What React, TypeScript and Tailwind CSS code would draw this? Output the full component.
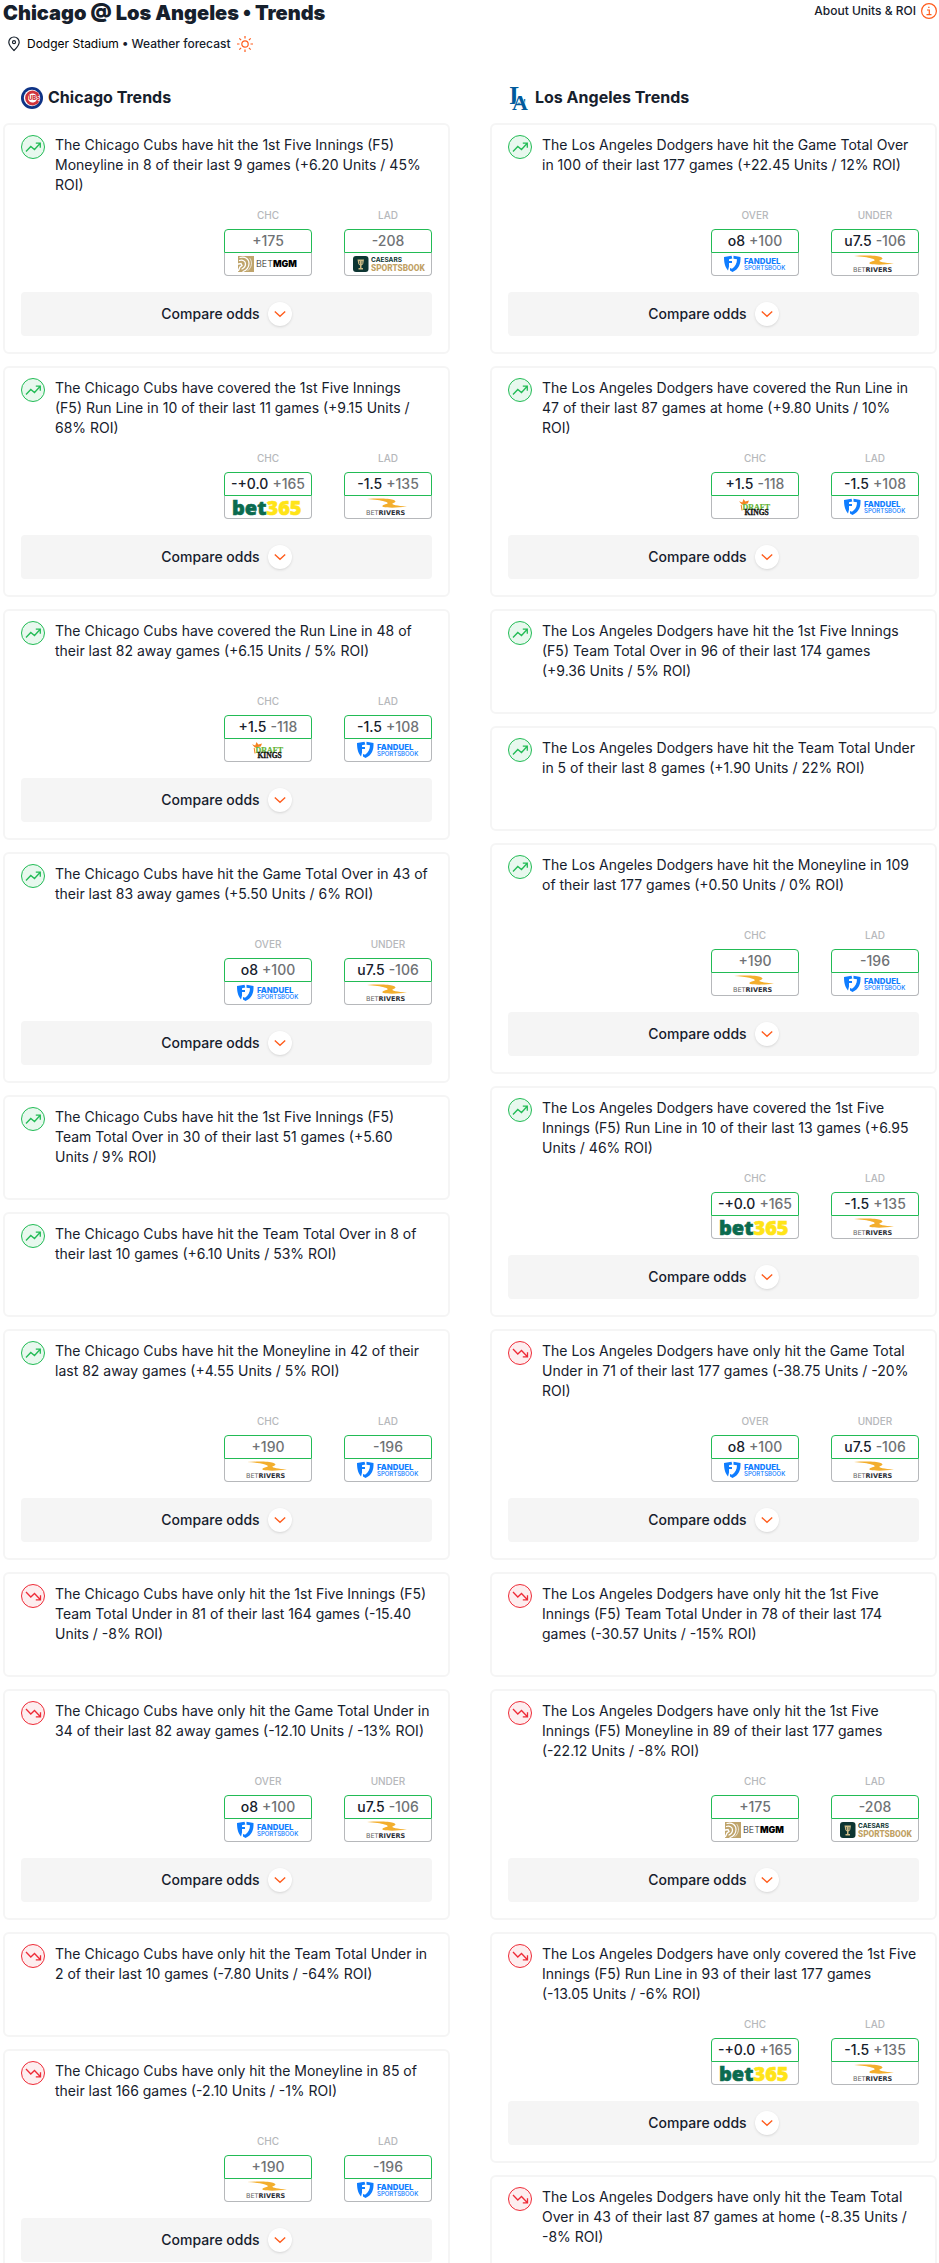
import { useState } from 'react';

type Book = 'betmgm' | 'caesars' | 'fanduel' | 'betrivers' | 'bet365' | 'draftkings';

interface Odd {
  label: string;
  line?: string;
  price: string;
  book: Book;
}

interface Trend {
  text: string;
  up: boolean;
  odds?: Odd[];
}

const f5Moneyline: Odd[] = [
  { label: 'CHC', price: '+175', book: 'betmgm' },
  { label: 'LAD', price: '-208', book: 'caesars' },
];
const f5RunLine: Odd[] = [
  { label: 'CHC', line: '-+0.0', price: '+165', book: 'bet365' },
  { label: 'LAD', line: '-1.5', price: '+135', book: 'betrivers' },
];
const runLine: Odd[] = [
  { label: 'CHC', line: '+1.5', price: '-118', book: 'draftkings' },
  { label: 'LAD', line: '-1.5', price: '+108', book: 'fanduel' },
];
const gameTotal: Odd[] = [
  { label: 'OVER', line: 'o8', price: '+100', book: 'fanduel' },
  { label: 'UNDER', line: 'u7.5', price: '-106', book: 'betrivers' },
];
const moneyline: Odd[] = [
  { label: 'CHC', price: '+190', book: 'betrivers' },
  { label: 'LAD', price: '-196', book: 'fanduel' },
];

const chicagoTrends: Trend[] = [
  { up: true, text: 'The Chicago Cubs have hit the 1st Five Innings (F5) Moneyline in 8 of their last 9 games (+6.20 Units / 45% ROI)', odds: f5Moneyline },
  { up: true, text: 'The Chicago Cubs have covered the 1st Five Innings (F5) Run Line in 10 of their last 11 games (+9.15 Units / 68% ROI)', odds: f5RunLine },
  { up: true, text: 'The Chicago Cubs have covered the Run Line in 48 of their last 82 away games (+6.15 Units / 5% ROI)', odds: runLine },
  { up: true, text: 'The Chicago Cubs have hit the Game Total Over in 43 of their last 83 away games (+5.50 Units / 6% ROI)', odds: gameTotal },
  { up: true, text: 'The Chicago Cubs have hit the 1st Five Innings (F5) Team Total Over in 30 of their last 51 games (+5.60 Units / 9% ROI)' },
  { up: true, text: 'The Chicago Cubs have hit the Team Total Over in 8 of their last 10 games (+6.10 Units / 53% ROI)' },
  { up: true, text: 'The Chicago Cubs have hit the Moneyline in 42 of their last 82 away games (+4.55 Units / 5% ROI)', odds: moneyline },
  { up: false, text: 'The Chicago Cubs have only hit the 1st Five Innings (F5) Team Total Under in 81 of their last 164 games (-15.40 Units / -8% ROI)' },
  { up: false, text: 'The Chicago Cubs have only hit the Game Total Under in 34 of their last 82 away games (-12.10 Units / -13% ROI)', odds: gameTotal },
  { up: false, text: 'The Chicago Cubs have only hit the Team Total Under in 2 of their last 10 games (-7.80 Units / -64% ROI)' },
  { up: false, text: 'The Chicago Cubs have only hit the Moneyline in 85 of their last 166 games (-2.10 Units / -1% ROI)', odds: moneyline },
];

const losAngelesTrends: Trend[] = [
  { up: true, text: 'The Los Angeles Dodgers have hit the Game Total Over in 100 of their last 177 games (+22.45 Units / 12% ROI)', odds: gameTotal },
  { up: true, text: 'The Los Angeles Dodgers have covered the Run Line in 47 of their last 87 games at home (+9.80 Units / 10% ROI)', odds: runLine },
  { up: true, text: 'The Los Angeles Dodgers have hit the 1st Five Innings (F5) Team Total Over in 96 of their last 174 games (+9.36 Units / 5% ROI)' },
  { up: true, text: 'The Los Angeles Dodgers have hit the Team Total Under in 5 of their last 8 games (+1.90 Units / 22% ROI)' },
  { up: true, text: 'The Los Angeles Dodgers have hit the Moneyline in 109 of their last 177 games (+0.50 Units / 0% ROI)', odds: moneyline },
  { up: true, text: 'The Los Angeles Dodgers have covered the 1st Five Innings (F5) Run Line in 10 of their last 13 games (+6.95 Units / 46% ROI)', odds: f5RunLine },
  { up: false, text: 'The Los Angeles Dodgers have only hit the Game Total Under in 71 of their last 177 games (-38.75 Units / -20% ROI)', odds: gameTotal },
  { up: false, text: 'The Los Angeles Dodgers have only hit the 1st Five Innings (F5) Team Total Under in 78 of their last 174 games (-30.57 Units / -15% ROI)' },
  { up: false, text: 'The Los Angeles Dodgers have only hit the 1st Five Innings (F5) Moneyline in 89 of their last 177 games (-22.12 Units / -8% ROI)', odds: f5Moneyline },
  { up: false, text: 'The Los Angeles Dodgers have only covered the 1st Five Innings (F5) Run Line in 93 of their last 177 games (-13.05 Units / -6% ROI)', odds: f5RunLine },
  { up: false, text: 'The Los Angeles Dodgers have only hit the Team Total Over in 43 of their last 87 games at home (-8.35 Units / -8% ROI)' },
];

function BookLogo({ book }: { book: Book }) {
  return (
    <svg width="86" height="22" viewBox="0 0 86 22" className="overflow-visible" aria-hidden="true">
      {book === 'betmgm' && (
        <>
          <rect x="13" y="3" width="16" height="16" fill="#bfa46b" />
          <g fill="none" stroke="#fff" strokeLinecap="round">
            <path d="M15 4.5c5-1.500 9 1.500 9 6 0 4-2 6.500-6 8" strokeWidth="1.200" />
            <path d="M14.500 7.500c3-1 6 .5 6 3.500s-1.500 4-3.500 5" strokeWidth="1.300" />
            <path d="M13.500 11l2.500-.5 1 2-2 1.500-1.500 3.500" strokeWidth="1.400" />
            <path d="M25 5.500c2.500 3.500 2 8.500-2 12" strokeWidth=".7" />
          </g>
          <text x="31" y="14" fontSize="9" fontWeight="300" fill="#222">
            BET<tspan fontWeight="900" fill="#000">MGM</tspan>
          </text>
        </>
      )}
      {book === 'caesars' && (
        <>
          <rect x="8" y="3" width="15.500" height="16" rx="3" fill="#0d3532" />
          <path d="M12.500 6.500h6.500l-.8 4.500-1.700 1.500v2.500h1.500v1.500h-4.500V15H15v-2.500L13.300 11z" fill="#cdbb85" />
          <path d="M14.500 8v3M17 8v3" stroke="#0d3532" strokeWidth=".6" />
          <text x="26" y="8.500" fontSize="6.500" fontWeight="700" fill="#0d3532">CAESARS</text>
          <text x="26" y="17.500" fontSize="8.300" fontWeight="800" fill="#c0a062" style={{ fontFamily: 'Roboto, sans-serif' }}>SPORTSBOOK</text>
        </>
      )}
      {book === 'fanduel' && (
        <>
          <path d="M12 4l7.500-1.200.8 2.700-3.300.7V8h3v2h-3v3.500l-1 4C13.500 14.500 12 11 12 4z" fill="#0f7dff" />
          <path d="M21.500 2.800L28.500 4c.3 7-1.500 12-8 15l-2.500-1.500V15l2 .8c3.200-2.300 5-5 5-9.500l-3.500-.6z" fill="#0f7dff" />
          <text x="32" y="10.500" fontSize="7.800" fontWeight="800" fill="#0f7dff">FANDUEL</text>
          <text x="32" y="16.500" fontSize="6" fontWeight="500" fill="#0f7dff">SPORTSBOOK</text>
        </>
      )}
      {book === 'betrivers' && (
        <>
          <path d="M22 3C32 2.300 44 2.300 48 3.800c4 1.500 2.500 2.700-.5 3.600-1.500 1 4.500 2.300 14.500 3.100-10 1.500-19 1.300-23.500.6-2.500-.9-.5-2.300 3-3.100C46 6.700 38 4 22 3z" fill="#f3ae2d" />
          <text x="21" y="19" fontSize="6.500" fill="#666" style={{ fontFamily: '"DejaVu Sans", sans-serif' }}>
            BET<tspan fontWeight="700" fill="#2b2f38">RIVERS</tspan>
          </text>
        </>
      )}
      {book === 'bet365' && (
        <text x="7" y="18.500" fontSize="20" fontWeight="900" fill="#0b6b4f" stroke="#0b6b4f" strokeWidth=".6" style={{ fontFamily: '"Noto Sans", "Open Sans", sans-serif' }}>
          bet<tspan fill="#ffe418" stroke="#ffe418">365</tspan>
        </text>
      )}
      {book === 'draftkings' && (
        <>
          <path d="M27 5.200l3.300 1.300L31.500 3l1.800 2.500L37 4.500l-1.200 3-6 1z" fill="#f58220" />
          <path d="M29.200 9l.8 5.500" stroke="#f58220" strokeWidth="1" />
          <text x="30.500" y="13.600" fontSize="8" fontWeight="700" fill="#61b22f" stroke="#61b22f" strokeWidth=".2" style={{ fontFamily: '"Liberation Serif", serif' }}>DRAFT</text>
          <text x="32.500" y="19.300" fontSize="7.500" fontWeight="700" fill="#111" stroke="#111" strokeWidth=".3" style={{ fontFamily: '"Liberation Serif", serif' }}>KINGS</text>
        </>
      )}
    </svg>
  );
}

function TrendIcon({ up }: { up: boolean }) {
  return up ? (
    <svg width="24" height="24" viewBox="0 0 24 24" fill="none" stroke="#22bb55" className="shrink-0" aria-hidden="true">
      <circle cx="12" cy="12" r="11.500" fill="#e8f8ee" />
      <path d="M5 16.500l4.800-5 3.700 3L19 8.500M14.800 8.200h4.500v4.500" strokeWidth="1.300" />
    </svg>
  ) : (
    <svg width="24" height="24" viewBox="0 0 24 24" fill="none" stroke="#ee2b37" className="shrink-0" aria-hidden="true">
      <circle cx="12" cy="12" r="11.500" fill="#fdeeef" />
      <path d="M5 8l4.800 5 3.700-3.500 5.700 6M14.800 15.800h4.700v-4.500" strokeWidth="1.300" />
    </svg>
  );
}

function CubsLogo() {
  return (
    <svg width="24" height="24" viewBox="-1 -1 24 24" aria-hidden="true">
      <circle cx="11" cy="11" r="11" fill="#0e3386" />
      <circle cx="11" cy="11" r="8.200" fill="#fff" />
      <path d="M16.800 8.200A6 6 0 1 0 16.800 13.800" fill="none" stroke="#d0343b" strokeWidth="2.800" />
      <path d="M15.500 5.500h1.800v3.300h-1.800zM15.500 13.200h1.800v3.300h-1.800z" fill="#d0343b" />
      <text x="7.500" y="13.200" fontSize="5.500" fontWeight="900" fill="#d0343b">UBS</text>
    </svg>
  );
}

function DodgersLogo() {
  return (
    <svg width="24" height="24" viewBox="0 0 24 24" fill="#005a9c" className="overflow-visible" aria-hidden="true" style={{ fontFamily: '"Liberation Serif", serif' }}>
      <text x="2.500" y="18" fontSize="25" fontWeight="700">L</text>
      <text x="5" y="23.500" fontSize="22" fontWeight="700" stroke="#fff" strokeWidth=".8" paintOrder="stroke">A</text>
    </svg>
  );
}

function OddBox({ odd }: { odd: Odd }) {
  return (
    <div className="w-[88px]">
      <p className="mb-1.5 text-center text-[10px] leading-4 font-medium text-[#b6b8bb]">{odd.label}</p>
      <a href="#odds" className="block">
        <span className="flex h-6 items-center justify-center gap-1 rounded-t border border-[#22bb55] text-sm font-medium text-[#6f7275]">
          {odd.line && <span className="text-[#16202c]">{odd.line}</span>}
          <span>{odd.price}</span>
        </span>
        <span className="flex h-[23px] items-center justify-center rounded-b border border-t-0 border-[#b6b8bb]">
          <BookLogo book={odd.book} />
        </span>
      </a>
    </div>
  );
}

function TrendCard({ trend }: { trend: Trend }) {
  const [open, setOpen] = useState(false);

  return (
    <article className="rounded-md border-2 border-[#f5f5f5] px-4 pt-2.5 pb-4">
      <div className="flex min-h-[60px] gap-2.5 pr-0.5">
        <TrendIcon up={trend.up} />
        <p className="text-sm leading-5">{trend.text}</p>
      </div>
      {trend.odds ? (
        <>
          <div className="mt-3 flex justify-end gap-8">
            {trend.odds.map((odd) => (
              <OddBox key={odd.label} odd={odd} />
            ))}
          </div>
          <button
            type="button"
            aria-expanded={open}
            onClick={() => setOpen(!open)}
            className="mt-4 flex h-11 w-full items-center justify-center gap-2 rounded bg-[#f5f5f5] text-sm font-medium"
          >
            Compare odds
            <span className="flex size-6 items-center justify-center rounded-full bg-white shadow-sm">
              <svg width="12" height="8" viewBox="0 0 12 8" fill="none" stroke="#ff5c1c" strokeWidth="1.400" aria-hidden="true">
                <path d="M.8 1.500L6 6.200l5.200-4.700" />
              </svg>
            </span>
          </button>
        </>
      ) : (
        <div className="h-[15px]" />
      )}
    </article>
  );
}

export default function App() {
  return (
    <main className="bg-white pr-0.5 pl-[3px] font-['Inter',sans-serif] text-[#16202c]">
      <header className="flex items-start justify-between">
        <div>
          <h1 className="text-xl leading-[26px] font-black">Chicago @ Los Angeles • Trends</h1>
          <div className="mt-2 flex h-5 items-center pl-1 text-xs font-medium">
            <svg width="14" height="16" viewBox="0 0 14 16" fill="none" stroke="#16202c" strokeWidth="1.200" aria-hidden="true">
              <path d="M7 14.500C4 11.500 1.800 9 1.800 6.200a5.200 5.200 0 0 1 10.400 0C12.200 9 10 11.500 7 14.500z" />
              <circle cx="7" cy="6.200" r="1.500" />
            </svg>
            <span className="ml-1.5">
              <span className="font-normal text-black">Dodger Stadium</span> • <a href="#weather">Weather forecast</a>
            </span>
            <svg width="16" height="16" viewBox="0 0 16 16" fill="none" stroke="#ff5c1c" strokeWidth="1.200" className="ml-1.5" aria-hidden="true">
              <circle cx="8" cy="8" r="3.200" />
              <path d="M8 0v2.500M8 13.500V16M0 8h2.500M13.500 8H16M2.300 2.300l1.800 1.800M11.900 11.900l1.800 1.800M2.300 13.700l1.800-1.800M11.900 4.100l1.800-1.800" />
            </svg>
          </div>
        </div>
        <a href="#about" className="mt-[3px] flex items-center gap-[5px] text-xs leading-4 font-medium">
          About Units &amp; ROI
          <svg width="16" height="16" viewBox="0 0 16 16" fill="none" stroke="#ff5c1c" strokeWidth="1.200" aria-hidden="true">
            <circle cx="8" cy="8" r="7.400" />
            <path d="M6 7h2.300v4.500M5.500 11.600h5M7.200 4.400h1.300" />
          </svg>
        </a>
      </header>

      <div className="mt-[31px] grid grid-cols-2 items-start gap-10">
        <section>
          <h2 className="mb-3 flex h-[26px] items-center gap-1 pl-[17px] text-base font-bold">
            <CubsLogo />
            <span className="pb-0.5">Chicago Trends</span>
          </h2>
          <div className="flex flex-col gap-3">
            {chicagoTrends.map((trend) => (
              <TrendCard key={trend.text} trend={trend} />
            ))}
          </div>
        </section>
        <section>
          <h2 className="mb-3 flex h-[26px] items-center gap-1 pl-[17px] text-base font-bold">
            <DodgersLogo />
            <span className="pb-0.5">Los Angeles Trends</span>
          </h2>
          <div className="flex flex-col gap-3">
            {losAngelesTrends.map((trend) => (
              <TrendCard key={trend.text} trend={trend} />
            ))}
          </div>
        </section>
      </div>
    </main>
  );
}
